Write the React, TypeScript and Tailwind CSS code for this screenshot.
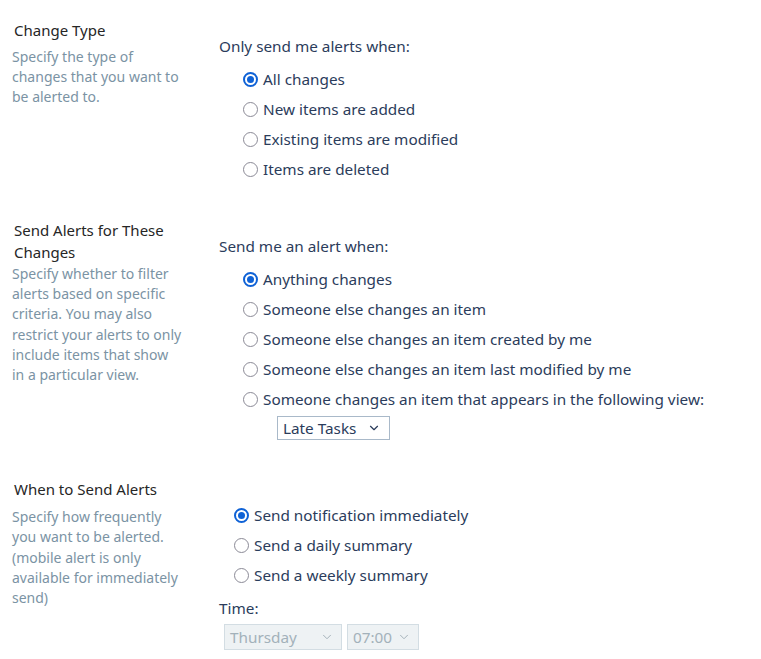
import { ChevronDown } from 'lucide-react';

const font = { fontFamily: '"Noto Sans", "Open Sans", sans-serif' };

function Radio({ label, checked }: { label: string; checked?: boolean }) {
  return (
    <div className="flex items-center h-[30px] gap-[5px]">
      {checked ? (
        <span className="w-[15px] h-[15px] rounded-full border-2 border-[#0f62d6] flex items-center justify-center shrink-0">
          <span className="w-[7px] h-[7px] rounded-full bg-[#0f62d6]" />
        </span>
      ) : (
        <span className="w-[15px] h-[15px] rounded-full border-[1.5px] border-[#8b8a96] shrink-0" />
      )}
      <span className="text-[15.3px] text-[#2b3c5b] whitespace-nowrap">{label}</span>
    </div>
  );
}

function Section({ title, lines, descClass, children, className }: any) {
  return (
    <div className={`flex ${className || ''}`}>
      <div className="w-[219px] pl-[12px] shrink-0">
        <div className="pl-[2px] text-[15px] leading-[22px] text-[#262626] w-[170px]">{title}</div>
        <div className={`text-[14px] text-[#7b93a4] whitespace-nowrap ${descClass}`}>
          {lines.map((l: string) => (
            <div key={l}>{l}</div>
          ))}
        </div>
      </div>
      <div className="flex-1">{children}</div>
    </div>
  );
}

export default function App() {
  return (
    <div className="bg-white w-[761px] h-[659px] overflow-hidden pt-[19px]" style={font}>
      {/* Change Type */}
      <Section
        className="h-[200px]"
        title="Change Type"
        descClass="mt-[6px] leading-[20px]"
        lines={['Specify the type of', 'changes that you want to', 'be alerted to.']}
      >
        <div className="pt-[17px] text-[15.3px] leading-[20px] text-[#2b3c5b]">Only send me alerts when:</div>
        <div className="mt-[8px] ml-[24px]">
          <Radio label="All changes" checked />
          <Radio label="New items are added" />
          <Radio label="Existing items are modified" />
          <Radio label="Items are deleted" />
        </div>
      </Section>

      {/* Send Alerts for These Changes */}
      <Section
        className="h-[259px]"
        title="Send Alerts for These Changes"
        descClass="mt-[1px] leading-[20.2px]"
        lines={[
          'Specify whether to filter',
          'alerts based on specific',
          'criteria. You may also',
          'restrict your alerts to only',
          'include items that show',
          'in a particular view.',
        ]}
      >
        <div className="pt-[17px] text-[15.3px] leading-[20px] text-[#2b3c5b]">Send me an alert when:</div>
        <div className="mt-[8px] ml-[24px]">
          <Radio label="Anything changes" checked />
          <Radio label="Someone else changes an item" />
          <Radio label="Someone else changes an item created by me" />
          <Radio label="Someone else changes an item last modified by me" />
          <Radio label="Someone changes an item that appears in the following view:" />
        </div>
        <div className="mt-[2px] ml-[58px] w-[113px] h-[24px] border border-[#a9b9c9] flex items-center justify-between pl-[5px] pr-[8px]">
          <span className="text-[15.3px] text-[#2b3c5b]">Late Tasks</span>
          <ChevronDown className="w-[14px] h-[14px] text-[#2b3c5b]" strokeWidth={2} />
        </div>
      </Section>

      {/* When to Send Alerts */}
      <Section
        title="When to Send Alerts"
        descClass="mt-[7px] leading-[20.3px]"
        lines={[
          'Specify how frequently',
          'you want to be alerted.',
          '(mobile alert is only',
          'available for immediately',
          'send)',
        ]}
      >
        <div className="pt-[22px] ml-[15px]">
          <Radio label="Send notification immediately" checked />
          <Radio label="Send a daily summary" />
          <Radio label="Send a weekly summary" />
        </div>
        <div className="mt-[8px] text-[15.3px] leading-[20px] text-[#2b3c5b]">Time:</div>
        <div className="mt-[6px] ml-[5px] flex gap-[5px]">
          <div className="w-[118px] h-[26px] border border-[#d3dde3] bg-[#eef2f4] flex items-center justify-between pl-[5px] pr-[7px]">
            <span className="text-[15.3px] text-[#a3b1ba]">Thursday</span>
            <ChevronDown className="w-[14px] h-[14px] text-[#9aa8b1]" strokeWidth={1.5} />
          </div>
          <div className="w-[72px] h-[26px] border border-[#d3dde3] bg-[#eef2f4] flex items-center justify-between pl-[5px] pr-[7px]">
            <span className="text-[15.3px] text-[#a3b1ba]">07:00</span>
            <ChevronDown className="w-[14px] h-[14px] text-[#9aa8b1]" strokeWidth={1.5} />
          </div>
        </div>
      </Section>
    </div>
  );
}
